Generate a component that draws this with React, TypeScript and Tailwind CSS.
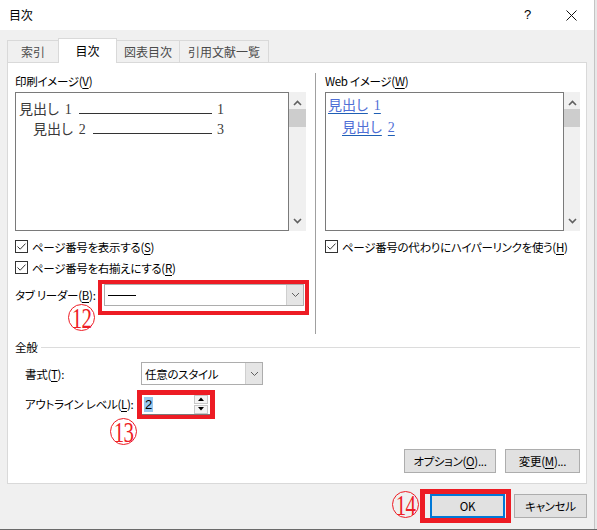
import React from "react";

const U = ({ c }: { c: string }) => <span className="underline underline-offset-2">{c}</span>;

const Check = () => (
  <span className="w-[13px] h-[13px] border border-[#333333] bg-white flex items-center justify-center shrink-0">
    <svg width="11" height="11" viewBox="0 0 11 11">
      <path d="M1.5 5.5 L4.2 8.2 L9.5 2.6" fill="none" stroke="#333333" strokeWidth="1" />
    </svg>
  </span>
);

const ScrollBar = ({ w }: { w: string }) => (
  <div className={`${w} h-full bg-[#f0f0f0] flex flex-col`}>
    <div className="h-[17px] flex items-end justify-center pb-[3px]">
      <svg width="9" height="6" viewBox="0 0 9 6">
        <path d="M1 5 L4.5 1.5 L8 5" stroke="#606060" strokeWidth="1.6" fill="none" />
      </svg>
    </div>
    <div className="h-[18px] bg-[#cdcdcd]" />
    <div className="flex-1" />
    <div className="h-[17px] flex items-start justify-center pt-[4px]">
      <svg width="9" height="6" viewBox="0 0 9 6">
        <path d="M1 1 L4.5 4.5 L8 1" stroke="#606060" strokeWidth="1.6" fill="none" />
      </svg>
    </div>
  </div>
);

const Chevron = () => (
  <svg width="9" height="6" viewBox="0 0 9 6">
    <path d="M1 1 L4.5 4.5 L8 1" stroke="#606060" strokeWidth="1" fill="none" />
  </svg>
);

const Circled = ({ n, x, y }: { n: string; x: string; y: string }) => (
  <div
    className={`absolute ${x} ${y} w-[27px] h-[27px] rounded-full border-[1.5px] border-[#ee1c24] flex items-center justify-center text-[#ee1c24] font-['Liberation_Serif',serif] text-[29px] leading-none tracking-normal`}
  >
    <span className="inline-block scale-x-[0.72] tracking-[-1px] pt-[2px]">{n}</span>
  </div>
);

export default function App() {
  return (
    <div className="w-[597px] h-[530px] flex flex-col bg-[#f0f0f0] overflow-hidden relative font-['Noto_Sans_CJK_JP',sans-serif] text-[11.5px] tracking-[-0.3px] text-black whitespace-nowrap [font-feature-settings:'palt']">
      <div className="h-[529px] flex">
        <div className="w-[594px] flex flex-col">
          {/* Title bar */}
          <div className="h-[30px] bg-white flex items-center pl-[9px]">
            <span className="leading-[16px] text-[12px]">目次</span>
            <span className="ml-auto text-[13px] font-['Liberation_Sans',sans-serif] mr-[35px]">?</span>
            <svg width="11" height="11" viewBox="0 0 11 11" className="mr-[17px]">
              <path d="M0.5 0.5 L10.5 10.5 M10.5 0.5 L0.5 10.5" stroke="#111" strokeWidth="1" />
            </svg>
          </div>

          {/* Body */}
          <div className="flex-1 flex flex-col px-[7px]">
            {/* Tabs */}
            <div className="h-[32px] flex items-end text-[12px] tracking-normal">
              <div className="w-[52px] h-[22px] border border-b-0 border-[#d9d9d9] flex items-center justify-center text-[#4a4a4a] leading-[16px]">
                索引
              </div>
              <div className="w-[59px] h-[25px] -ml-px -mb-px relative z-10 bg-white border border-b-0 border-[#d9d9d9] flex items-center justify-center leading-[16px]">
                目次
              </div>
              <div className="w-[64px] h-[22px] -ml-px border border-b-0 border-[#d9d9d9] flex items-center justify-center text-[#4a4a4a] leading-[16px]">
                図表目次
              </div>
              <div className="w-[90px] h-[22px] -ml-px border border-b-0 border-[#d9d9d9] flex items-center justify-center text-[#4a4a4a] leading-[16px]">
                引用文献一覧
              </div>
            </div>

            {/* Panel */}
            <div className="w-[580px] h-[422px] border border-[#d9d9d9] bg-white flex flex-col">
              <div className="flex pl-[7px] pt-[10px]">
                {/* Left column */}
                <div className="w-[291px] flex flex-col">
                  <div className="h-[16px] leading-[16px]">
                    印刷イメージ(<U c="V" />)
                  </div>
                  <div className="mt-[3px] h-[139px] flex">
                    <div className="w-[274px] h-full border border-[#7a7a7a] bg-white pt-[6px] font-['Liberation_Serif','Noto_Sans_CJK_JP',serif] text-[14px] tracking-normal text-[#3a3a3a]">
                      <div className="h-[20px] flex items-baseline pl-[3px]">
                        <span className="w-[60px] shrink-0">
                          見出し<span className="ml-[6px]">1</span>
                        </span>
                        <span className="w-[133px] h-px bg-[#333333] shrink-0" />
                        <span className="ml-[5px]">1</span>
                      </div>
                      <div className="h-[19px] flex items-baseline pl-[17px]">
                        <span className="w-[60px] shrink-0">
                          見出し<span className="ml-[6px]">2</span>
                        </span>
                        <span className="w-[119px] h-px bg-[#333333] shrink-0" />
                        <span className="ml-[5px]">3</span>
                      </div>
                    </div>
                    <ScrollBar w="w-[17px]" />
                  </div>
                  <div className="mt-[9px] h-[13px] flex items-center">
                    <Check />
                    <span className="ml-[4px] leading-[16px]">
                      ページ番号を表示する(<U c="S" />)
                    </span>
                  </div>
                  <div className="mt-[8px] h-[13px] flex items-center">
                    <Check />
                    <span className="ml-[4px] leading-[16px]">
                      ページ番号を右揃えにする(<U c="R" />)
                    </span>
                  </div>
                  <div className="mt-[10px] h-[22px] flex items-center">
                    <span className="w-[89px] leading-[16px] shrink-0">
                      タブ リーダー(<U c="B" />):
                    </span>
                    <div className="w-[200px] h-[22px] border border-[#adadad] bg-white flex">
                      <div className="flex-1 flex items-center pl-[3px]">
                        <span className="w-[28px] h-px bg-black" />
                      </div>
                      <div className="w-[17px] bg-[#e5e5e5] border-l border-[#cfcfcf] flex items-center justify-center">
                        <Chevron />
                      </div>
                    </div>
                  </div>
                </div>

                {/* Separator */}
                <div className="ml-[9px] w-px h-[261px] bg-[#a0a0a0]" />

                {/* Right column */}
                <div className="ml-[9px] w-[255px] flex flex-col">
                  <div className="h-[16px] leading-[16px]">
                    Web イメージ(<U c="W" />)
                  </div>
                  <div className="mt-[3px] h-[139px] flex">
                    <div className="w-[239px] h-full border border-[#7a7a7a] bg-white pt-[2px] font-['Liberation_Serif','Noto_Sans_CJK_JP',serif] text-[14px] tracking-normal text-[#4f6fd6]">
                      <div className="h-[22px] leading-[22px] pl-[2px]">
                        <span className="underline decoration-[#1f5fb4] underline-offset-[3px]">
                          見出し<span className="ml-[6px]">1</span>
                        </span>
                      </div>
                      <div className="h-[22px] leading-[22px] pl-[16px]">
                        <span className="underline decoration-[#1f5fb4] underline-offset-[3px]">
                          見出し<span className="ml-[6px]">2</span>
                        </span>
                      </div>
                    </div>
                    <ScrollBar w="w-[16px]" />
                  </div>
                  <div className="mt-[9px] h-[13px] flex items-center">
                    <Check />
                    <span className="ml-[4px] leading-[16px]">
                      ページ番号の代わりにハイパーリンクを使う(<U c="H" />)
                    </span>
                  </div>
                </div>
              </div>

              {/* General section */}
              <div className="mt-[5px] h-[16px] flex items-center pl-[7px] pr-[6px]">
                <span className="leading-[16px]">全般</span>
                <span className="flex-1 h-px bg-[#dcdcdc] ml-[4px]" />
              </div>
              <div className="mt-[7px] h-[23px] flex items-center pl-[17px]">
                <span className="w-[116px] leading-[16px] shrink-0">
                  書式(<U c="T" />):
                </span>
                <div className="w-[122px] h-[23px] border border-[#adadad] bg-white flex">
                  <div className="flex-1 flex items-center pl-[3px] leading-[16px]">任意のスタイル</div>
                  <div className="w-[17px] bg-[#e5e5e5] border-l border-[#cfcfcf] flex items-center justify-center">
                    <Chevron />
                  </div>
                </div>
              </div>
              <div className="mt-[8px] h-[22px] flex items-center pl-[17px]">
                <span className="w-[116px] leading-[16px] shrink-0">
                  アウトライン レベル(<U c="L" />):
                </span>
                <div className="w-[70px] h-[22px] border border-[#7a7a7a] bg-white flex items-center pl-[2px]">
                  <span className="h-[15px] leading-[15px] bg-[#99c9ef] px-[1px] text-[13px] font-['Liberation_Sans',sans-serif]">2</span>
                  <div className="ml-auto mr-[2px] w-[14px] h-[19px] flex flex-col gap-[1px]">
                    <div className="flex-1 border border-[#c8c8c8] bg-[#f4f4f4] flex items-center justify-center">
                      <svg width="6" height="4" viewBox="0 0 6 4">
                        <path d="M0 4 L3 0.5 L6 4 Z" fill="#000" />
                      </svg>
                    </div>
                    <div className="flex-1 border border-[#c8c8c8] bg-[#f4f4f4] flex items-center justify-center">
                      <svg width="6" height="4" viewBox="0 0 6 4">
                        <path d="M0 0 L3 3.5 L6 0 Z" fill="#000" />
                      </svg>
                    </div>
                  </div>
                </div>
              </div>

              {/* Options buttons */}
              <div className="mt-[34px] flex justify-end gap-[9px] pr-[6px]">
                <div className="w-[92px] h-[24px] bg-[#e1e1e1] border border-[#adadad] flex items-center justify-center leading-[16px]">
                  オプション(<U c="O" />)...
                </div>
                <div className="w-[75px] h-[24px] bg-[#e1e1e1] border border-[#adadad] flex items-center justify-center leading-[16px]">
                  変更(<U c="M" />)...
                </div>
              </div>
            </div>

            {/* Footer */}
            <div className="pt-[10px] flex justify-end gap-[9px]">
              <div className="w-[75px] h-[24px] bg-[#e1e1e1] border-2 border-[#0078d7] flex items-center justify-center leading-[16px]">
                OK
              </div>
              <div className="w-[73px] h-[24px] bg-[#e1e1e1] border border-[#adadad] flex items-center justify-center leading-[16px]">
                キャンセル
              </div>
            </div>
          </div>
        </div>
        {/* right edge of window */}
        <div className="w-[3px] bg-[#e8e8e8] border-l border-[#c4c4c4]" />
      </div>
      <div className="h-px bg-[#6a6a6a]" />

      {/* Annotations */}
      <div className="absolute left-[98px] top-[280px] w-[211px] h-[35px] border-4 border-[#ed1c24]" />
      <Circled n="12" x="left-[68px]" y="top-[304px]" />
      <div className="absolute left-[137px] top-[390px] w-[78px] h-[29px] border-[5px] border-b-4 border-[#ed1c24]" />
      <Circled n="13" x="left-[110px]" y="top-[418px]" />
      <div className="absolute left-[420px] top-[489px] w-[91px] h-[34px] border-[5px] border-[#ed1c24]" />
      <Circled n="14" x="left-[392px]" y="top-[491px]" />
    </div>
  );
}
